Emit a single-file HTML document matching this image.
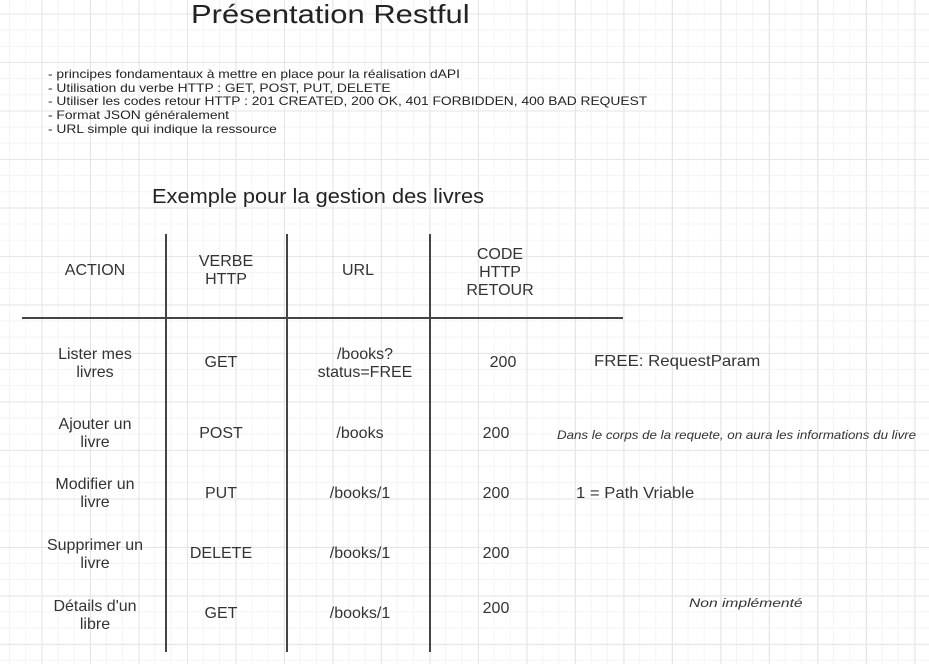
<!DOCTYPE html>
<html><head><meta charset="utf-8"><style>
html,body{margin:0;padding:0}
body{width:929px;height:664px;overflow:hidden;position:relative;background-color:#fff;
background-image:
linear-gradient(to right,#e6e6e6 1px,transparent 1px),
linear-gradient(to bottom,#e6e6e6 1px,transparent 1px),
linear-gradient(to right,#f4f4f4 1px,transparent 1px),
linear-gradient(to bottom,#f4f4f4 1px,transparent 1px);
background-size:48.5px 48.5px,48.5px 48.5px,16.17px 16.17px,16.17px 16.17px;
background-position:41.5px 13.5px,41.5px 13.5px,9px 13.5px,9px 13.5px;
font-family:"Liberation Sans",sans-serif;color:#333}
.a{position:absolute;white-space:nowrap;transform-origin:0 0}
.c{position:absolute;text-align:center;font-size:16px;line-height:18px;color:#333;white-space:nowrap}
.vl{position:absolute;width:2px;background:#444;top:234px;height:418px}
</style></head><body>
<div class="a" style="left:191px;top:-1px;font-size:26px;color:#222;transform:scaleX(1.19)">Présentation Restful</div>
<div class="a" style="left:48px;top:68px;font-size:12px;line-height:13.7px;color:#222;transform:scaleX(1.15)">- principes fondamentaux à mettre en place pour la réalisation dAPI<br>- Utilisation du verbe HTTP : GET, POST, PUT, DELETE<br>- Utiliser les codes retour HTTP : 201 CREATED, 200 OK, 401 FORBIDDEN, 400 BAD REQUEST<br>- Format JSON généralement<br>- URL simple qui indique la ressource</div>
<div class="a" style="left:152px;top:186px;font-size:20px;color:#222;transform:scaleX(1.09)">Exemple pour la gestion des livres</div>
<div class="vl" style="left:165px"></div>
<div class="vl" style="left:286px"></div>
<div class="vl" style="left:429px"></div>
<div style="position:absolute;left:22px;top:317px;width:601px;height:2px;background:#444"></div>

<div class="c" style="left:30px;width:130px;top:262px">ACTION</div>
<div class="c" style="left:166px;width:120px;top:253px">VERBE<br>HTTP</div>
<div class="c" style="left:287px;width:142px;top:262px">URL</div>
<div class="c" style="left:440px;width:120px;top:246px">CODE<br>HTTP<br>RETOUR</div>

<div class="c" style="left:30px;width:130px;top:346px">Lister mes<br>livres</div>
<div class="c" style="left:166px;width:110px;top:354px">GET</div>
<div class="c" style="left:295px;width:140px;top:346px">/books?<br>status=FREE</div>
<div class="c" style="left:473px;width:60px;top:354px">200</div>
<div class="a" style="left:594px;top:353px;font-size:16px;color:#333;transform:scaleX(1.05)">FREE: RequestParam</div>

<div class="c" style="left:30px;width:130px;top:416px">Ajouter un<br>livre</div>
<div class="c" style="left:166px;width:110px;top:425px">POST</div>
<div class="c" style="left:290px;width:140px;top:425px">/books</div>
<div class="c" style="left:466px;width:60px;top:425px">200</div>
<div class="a" style="left:557px;top:428px;font-size:12px;font-style:italic;color:#333;transform:scaleX(1.11)">Dans le corps de la requete, on aura les informations du livre</div>

<div class="c" style="left:30px;width:130px;top:476px">Modifier un<br>livre</div>
<div class="c" style="left:166px;width:110px;top:485px">PUT</div>
<div class="c" style="left:290px;width:140px;top:485px">/books/1</div>
<div class="c" style="left:466px;width:60px;top:485px">200</div>
<div class="a" style="left:576px;top:485px;font-size:16px;color:#333;transform:scaleX(1.04)">1 = Path Vriable</div>

<div class="c" style="left:30px;width:130px;top:537px">Supprimer un<br>livre</div>
<div class="c" style="left:166px;width:110px;top:545px">DELETE</div>
<div class="c" style="left:290px;width:140px;top:545px">/books/1</div>
<div class="c" style="left:466px;width:60px;top:545px">200</div>

<div class="c" style="left:30px;width:130px;top:598px">Détails d'un<br>libre</div>
<div class="c" style="left:166px;width:110px;top:605px">GET</div>
<div class="c" style="left:290px;width:140px;top:605px">/books/1</div>
<div class="c" style="left:466px;width:60px;top:600px">200</div>
<div class="a" style="left:689px;top:596px;font-size:12px;font-style:italic;color:#333;transform:scaleX(1.3)">Non implémenté</div>
</body></html>
